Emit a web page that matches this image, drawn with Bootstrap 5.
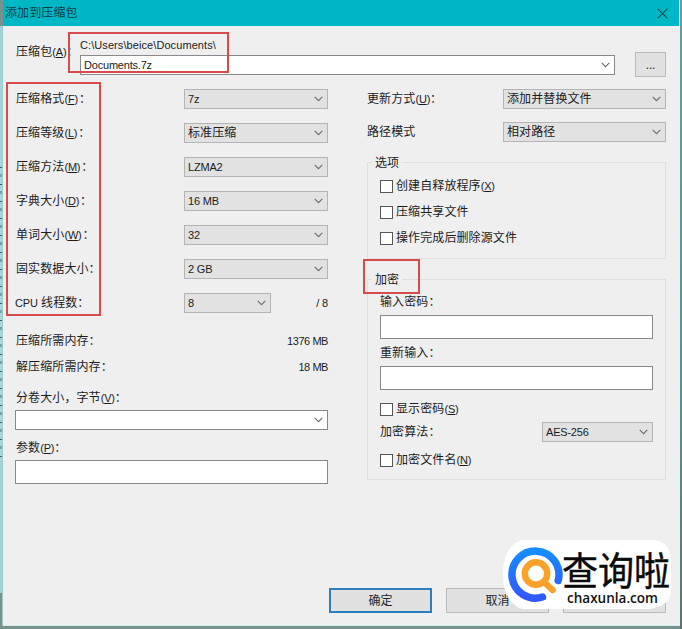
<!DOCTYPE html>
<html lang="zh-CN">
<head>
<meta charset="utf-8">
<meta name="viewport" content="width=device-width, initial-scale=1">
<title>添加到压缩包</title>
<link href="https://cdn.jsdelivr.net/npm/bootstrap@5.3.0/dist/css/bootstrap.min.css" rel="stylesheet">
<style>
body{font:12px/16px "Liberation Sans","Noto Sans CJK SC",sans-serif;letter-spacing:.1px;color:#1c1c1c;background:#6f9391;width:682px;height:629px;overflow:hidden}
.desktop{height:629px;padding:0 2px 3px 3px;background:
 linear-gradient(#9acbcd,#9acbcd) 2px 26px/1px 600px no-repeat,
 repeating-linear-gradient(#a9d8da 0 7px,#3d5f61 7px 8px,#a9d8da 8px 14px,#78a3a4 14px 17px) 0 160px/2px 300px no-repeat,
 linear-gradient(90deg,#a4d3d5,#a4d3d5) 0 26px/3px 567px no-repeat,
 linear-gradient(#6c9a98,#5f8f93 60%,#666f6a) 680px 0/2px 629px no-repeat,#78918d}
.dialog-win{height:626px;background:#efefef;border-right:2px solid #dff6f3;border-bottom:1px solid #d8eeea}
.title-strip{height:26px;background:#00b7c6;padding:0 11px 0 2px;margin-right:-1px;color:#0c3c42}
.en{font-size:11px;letter-spacing:-.2px}
.en.num{letter-spacing:-.45px}
u{text-underline-offset:1px}
.archive-row{height:56px;padding:11px 12px 0 12px}
.archive-label{width:65px;padding:7px 0 0 1px}
.archive-field{width:535px}
.archive-path{height:18px;line-height:17px;letter-spacing:.08px}
.combo,.entry{border:1px solid #898989;background:#fff}
.combo{height:20px;padding:0 4px 0 3px}
.combo.flat{background:#e2e2e2;border-color:#b4b4b4}
.combo svg{width:9px;height:6px;flex:none}
.entry{height:24px}
.w143{width:144px}.w87{width:87px}.w162{width:163px}.w111{width:111px}
.columns{padding:0 12px 0 12px}
.left-side{width:313px}
.right-side{width:299px}
.cap{padding-left:1px}
.cap .en{margin-right:1px}
.setting{height:34px}
.setting.path-mode{height:31px}
.mem{height:26px}
.mems{padding-top:8px}
.vol-label{padding:11px 0 4px 1px;line-height:15px}
.par-label{padding:12px 0 5px 1px;line-height:13px}
.group-box{border:1px solid #dfdfdf;padding:0 12px}
.group-title{height:16px;width:max-content;margin:-8px 0 0 -8px;padding:0 3px;background:#efefef}
.tick-row{height:26px}
.tick{width:13px;height:13px;border:1px solid #555;background:#fff;margin-right:3px}
.opts{height:97px;margin-top:15px}
.ticks{padding-top:2px}
.crypt{height:201px;margin-top:20px}
.pw-label{padding:6px 0 5px}
.algo{margin:2px 0 5px}
.push{width:103px;height:25px;border:1px solid #bababa;border-radius:0;background:#e1e1e1;font-size:12px;line-height:16px;padding:0}
.push.main-push{border:2px solid #2c7fbd}
.browse{width:31px;height:25px;margin-top:15px}
.actions{gap:14px;padding:104px 12px 0 0}
.note-frame{position:absolute;border:2px solid #d64b4b}
.n1{left:68px;top:32px;width:161px;height:41px}
.n2{left:6px;top:82px;width:95px;height:234px}
.n3{left:363px;top:259px;width:57px;height:35px}
.brand{position:absolute;left:500px;top:538px;letter-spacing:0}
</style>
<script src="https://cdn.jsdelivr.net/npm/bootstrap@5.3.0/dist/js/bootstrap.bundle.min.js"></script>
</head>
<body>
<svg width="0" height="0" class="position-absolute"><symbol id="chev" viewBox="0 0 9 6"><path d="M.7.9 4.5 4.7 8.3.9" fill="none" stroke="#6b6b6b" stroke-width="1.1"/></symbol></svg>
<div class="desktop">
<div class="dialog-win">
  <header class="title-strip d-flex align-items-center justify-content-between">
    <span>添加到压缩包</span>
    <svg width="11" height="11" viewBox="0 0 11 11"><path d="M.6.6l9.8 9.8M10.4.6.6 10.4" stroke="#0b4a52" stroke-width="1.1"/></svg>
  </header>
  <div class="archive-row d-flex">
    <div class="archive-label text-nowrap">压缩包<span class="en">(<u>A</u>)</span>：</div>
    <div class="archive-field">
      <div class="archive-path en">C:\Users\beice\Documents\</div>
      <div class="combo d-flex align-items-center justify-content-between"><span class="en">Documents.7z</span><svg><use href="#chev"/></svg></div>
    </div>
    <button class="btn push browse ms-auto en">...</button>
  </div>
  <div class="columns d-flex justify-content-between">
    <section class="left-side">
      <div class="setting d-flex align-items-center justify-content-between"><span class="cap">压缩格式<span class="en">(<u>F</u>)</span>：</span><div class="combo flat w143 d-flex align-items-center justify-content-between"><span class="en">7z</span><svg><use href="#chev"/></svg></div></div>
      <div class="setting d-flex align-items-center justify-content-between"><span class="cap">压缩等级<span class="en">(<u>L</u>)</span>：</span><div class="combo flat w143 d-flex align-items-center justify-content-between"><span>标准压缩</span><svg><use href="#chev"/></svg></div></div>
      <div class="setting d-flex align-items-center justify-content-between"><span class="cap">压缩方法<span class="en">(<u>M</u>)</span>：</span><div class="combo flat w143 d-flex align-items-center justify-content-between"><span class="en">LZMA2</span><svg><use href="#chev"/></svg></div></div>
      <div class="setting d-flex align-items-center justify-content-between"><span class="cap">字典大小<span class="en">(<u>D</u>)</span>：</span><div class="combo flat w143 d-flex align-items-center justify-content-between"><span class="en">16 MB</span><svg><use href="#chev"/></svg></div></div>
      <div class="setting d-flex align-items-center justify-content-between"><span class="cap">单词大小<span class="en">(<u>W</u>)</span>：</span><div class="combo flat w143 d-flex align-items-center justify-content-between"><span class="en">32</span><svg><use href="#chev"/></svg></div></div>
      <div class="setting d-flex align-items-center justify-content-between"><span class="cap">固实数据大小：</span><div class="combo flat w143 d-flex align-items-center justify-content-between"><span class="en">2 GB</span><svg><use href="#chev"/></svg></div></div>
      <div class="setting d-flex align-items-center justify-content-between"><span><span class="en">CPU</span> 线程数：</span><div class="w143 d-flex align-items-center justify-content-between"><div class="combo flat w87 d-flex align-items-center justify-content-between"><span class="en">8</span><svg><use href="#chev"/></svg></div><span class="en">/ 8</span></div></div>
      <div class="mems">
        <div class="mem d-flex align-items-center justify-content-between"><span class="cap">压缩所需内存：</span><span class="en num">1376 MB</span></div>
        <div class="mem d-flex align-items-center justify-content-between"><span class="cap">解压缩所需内存：</span><span class="en num">18 MB</span></div>
      </div>
      <div class="vol-label">分卷大小，字节<span class="en">(<u>V</u>)</span>：</div>
      <div class="combo d-flex align-items-center justify-content-end"><svg><use href="#chev"/></svg></div>
      <div class="par-label">参数<span class="en">(<u>P</u>)</span>：</div>
      <div class="entry"></div>
    </section>
    <section class="right-side">
      <div class="setting d-flex align-items-center justify-content-between"><span>更新方式<span class="en">(<u>U</u>)</span>：</span><div class="combo flat w162 d-flex align-items-center justify-content-between"><span>添加并替换文件</span><svg><use href="#chev"/></svg></div></div>
      <div class="setting path-mode d-flex align-items-center justify-content-between"><span>路径模式</span><div class="combo flat w162 d-flex align-items-center justify-content-between"><span>相对路径</span><svg><use href="#chev"/></svg></div></div>
      <div class="group-box opts">
        <div class="group-title">选项</div>
        <div class="ticks">
          <div class="tick-row d-flex align-items-center"><i class="tick"></i><span>创建自释放程序<span class="en">(<u>X</u>)</span></span></div>
          <div class="tick-row d-flex align-items-center"><i class="tick"></i><span>压缩共享文件</span></div>
          <div class="tick-row d-flex align-items-center"><i class="tick"></i><span>操作完成后删除源文件</span></div>
        </div>
      </div>
      <div class="group-box crypt">
        <div class="group-title">加密</div>
        <div class="pw-label">输入密码：</div>
        <div class="entry"></div>
        <div class="pw-label">重新输入：</div>
        <div class="entry"></div>
        <div class="tick-row d-flex align-items-center mt-1 pt-1"><i class="tick"></i><span>显示密码<span class="en">(<u>S</u>)</span></span></div>
        <div class="algo d-flex align-items-center justify-content-between"><span>加密算法：</span><div class="combo flat w111 d-flex align-items-center justify-content-between"><span class="en">AES-256</span><svg><use href="#chev"/></svg></div></div>
        <div class="tick-row d-flex align-items-center"><i class="tick"></i><span>加密文件名<span class="en">(<u>N</u>)</span></span></div>
      </div>
    </section>
  </div>
  <footer class="actions d-flex justify-content-end">
    <button class="btn push main-push">确定</button>
    <button class="btn push">取消</button>
    <button class="btn push" aria-label="帮助"></button>
  </footer>
</div>
</div>
<div class="note-frame n1"></div><div class="note-frame n2"></div><div class="note-frame n3"></div>
<svg class="brand" width="182" height="76" viewBox="500 538 182 76">
  <defs><linearGradient id="ring" x2="0" y2="1"><stop stop-color="#168cff"/><stop offset="1" stop-color="#3158fb"/></linearGradient></defs>
  <path d="M522 540H655Q671 543 671 561V591Q670 606 650 609H522Q503 602 503 574T522 540Z" fill="#fff"/>
  <path d="M542.5 597A23.5 23.5 0 1 1 558.2 580.5" fill="none" stroke="url(#ring)" stroke-width="7.5" stroke-linecap="round"/>
  <circle cx="536" cy="573.5" r="11.2" fill="none" stroke="#f9a22b" stroke-width="6.5"/>
  <path d="M544 582l8.500 8" stroke="#f9a22b" stroke-width="6.500" stroke-linecap="round"/>
  <text transform="translate(562 585) scale(1 1.08)" font-family="Noto Sans CJK SC,sans-serif" font-size="36" textLength="108" fill="#0b0b0b" stroke="#0b0b0b" stroke-width=".4">查询啦</text>
  <text x="567" y="603" font-family="Open Sans,sans-serif" font-weight="600" font-size="14" textLength="91" lengthAdjust="spacingAndGlyphs" fill="#111">chaxunla.com</text>
</svg>
</body>
</html>
